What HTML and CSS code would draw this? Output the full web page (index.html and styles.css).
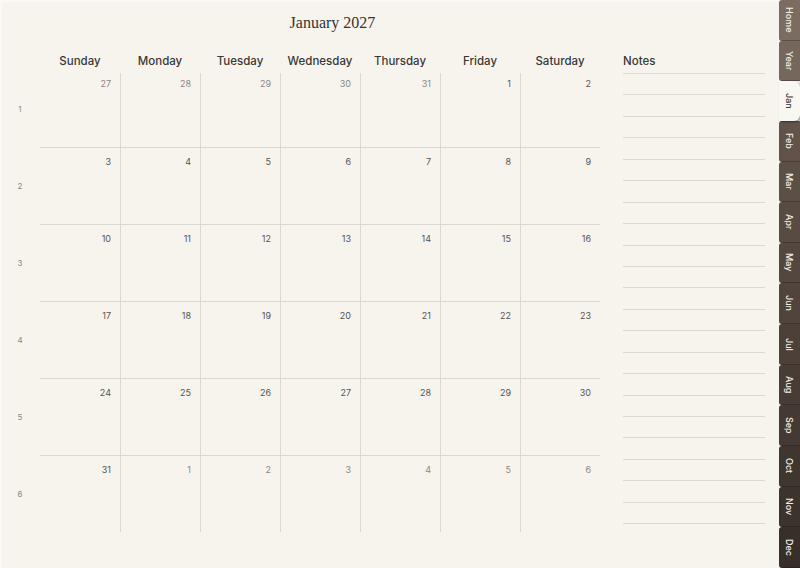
FILE: index.html
```html
<!DOCTYPE html>
<html>
<head>
<meta charset="utf-8">
<link rel="stylesheet" href="styles.css">
</head>
<body>
<div class="page">
  <div class="main">
    <div class="title">January 2027</div>
    <div class="content">
      <div class="cal">
        <div class="head">
          <div class="dn">Sunday</div><div class="dn">Monday</div><div class="dn">Tuesday</div><div class="dn">Wednesday</div><div class="dn">Thursday</div><div class="dn">Friday</div><div class="dn">Saturday</div>
        </div>
        <div class="week first">
          <div class="wk">1</div>
          <div class="cells">
            <div class="cell out">27</div><div class="cell out">28</div><div class="cell out">29</div><div class="cell out">30</div><div class="cell out">31</div><div class="cell">1</div><div class="cell">2</div>
          </div>
        </div>
        <div class="week">
          <div class="wk">2</div>
          <div class="cells">
            <div class="cell">3</div><div class="cell">4</div><div class="cell">5</div><div class="cell">6</div><div class="cell">7</div><div class="cell">8</div><div class="cell">9</div>
          </div>
        </div>
        <div class="week">
          <div class="wk">3</div>
          <div class="cells">
            <div class="cell">10</div><div class="cell">11</div><div class="cell">12</div><div class="cell">13</div><div class="cell">14</div><div class="cell">15</div><div class="cell">16</div>
          </div>
        </div>
        <div class="week">
          <div class="wk">4</div>
          <div class="cells">
            <div class="cell">17</div><div class="cell">18</div><div class="cell">19</div><div class="cell">20</div><div class="cell">21</div><div class="cell">22</div><div class="cell">23</div>
          </div>
        </div>
        <div class="week">
          <div class="wk">5</div>
          <div class="cells">
            <div class="cell">24</div><div class="cell">25</div><div class="cell">26</div><div class="cell">27</div><div class="cell">28</div><div class="cell">29</div><div class="cell">30</div>
          </div>
        </div>
        <div class="week">
          <div class="wk">6</div>
          <div class="cells">
            <div class="cell">31</div><div class="cell out">1</div><div class="cell out">2</div><div class="cell out">3</div><div class="cell out">4</div><div class="cell out">5</div><div class="cell out">6</div>
          </div>
        </div>
      </div>
      <div class="notes">
        <div class="nh">Notes</div>
        <div class="lines">
          <div class="ln"></div><div class="ln"></div><div class="ln"></div><div class="ln"></div><div class="ln"></div><div class="ln"></div><div class="ln"></div><div class="ln"></div><div class="ln"></div><div class="ln"></div><div class="ln"></div><div class="ln"></div><div class="ln"></div><div class="ln"></div><div class="ln"></div><div class="ln"></div><div class="ln"></div><div class="ln"></div><div class="ln"></div><div class="ln"></div><div class="ln"></div><div class="ln"></div>
        </div>
      </div>
    </div>
  </div>
  <div class="tabs">
    <div class="tab t1">Home</div>
    <div class="tab t2">Year</div>
    <div class="tab active">Jan</div>
    <div class="tab t4">Feb</div>
    <div class="tab t5">Mar</div>
    <div class="tab t6">Apr</div>
    <div class="tab t7">May</div>
    <div class="tab t8">Jun</div>
    <div class="tab t9">Jul</div>
    <div class="tab t10">Aug</div>
    <div class="tab t11">Sep</div>
    <div class="tab t12">Oct</div>
    <div class="tab t13">Nov</div>
    <div class="tab t14">Dec</div>
  </div>
</div>
</body>
</html>
```
FILE: styles.css
```css
* { box-sizing: border-box; }
html, body { margin: 0; padding: 0; }
body {
  background: #f7f4ee;
  font-family: Inter, "Noto Sans", sans-serif;
  width: 800px;
  height: 568px;
  overflow: hidden;
}
.page {
  display: flex;
  width: 800px;
  height: 568px;
}
.main {
  width: 779px;
  height: 568px;
  background: #f7f4ee;
  box-shadow: inset 2px 2px 0 #fbf9f5;
}
.title {
  width: 665px;
  text-align: center;
  font-family: "Liberation Serif", "DejaVu Serif", serif;
  font-size: 16px;
  line-height: 20px;
  color: #333;
  padding-top: 13px;
  height: 50px;
}
.content {
  display: flex;
}
.cal {
  width: 600px;
}
.head {
  display: flex;
  padding-left: 40px;
  padding-top: 1px;
  height: 23px;
}
.dn {
  width: 80px;
  text-align: center;
  font-size: 11.5px;
  font-weight: 500;
  line-height: 20px;
  color: #3a3835;
}
.week {
  display: flex;
  height: 77px;
}
.week.first { height: 74px; }
.wk {
  width: 40px;
  display: flex;
  align-items: center;
  justify-content: center;
  font-size: 8px;
  color: #8a8783;
}
.week.first .wk { margin-top: -3px; }
.cells {
  display: flex;
  flex: 1;
  border-top: 1px solid #dcd8d1;
}
.week.first .cells { border-top: none; }
.cell {
  width: 80px;
  padding: 8px 9px 0 0;
  text-align: right;
  font-size: 9px;
  line-height: 12px;
  color: #56534f;
  border-left: 1px solid #dcd8d1;
}
.week.first .cell { padding-top: 5px; }
.cell:first-child { border-left: none; }
.cell.out { color: #8a8782; }
.notes {
  margin-left: 23px;
  width: 142px;
}
.nh {
  height: 23px;
  padding-top: 1px;
  font-size: 11.5px;
  font-weight: 500;
  line-height: 20px;
  color: #3a3835;
}
.lines {
  display: flex;
  flex-direction: column;
  gap: 20.45px;
}
.ln {
  height: 1px;
  background: #dcd8d1;
}
.tabs {
  width: 21px;
  display: flex;
  flex-direction: column;
}
.tab {
  flex: 1;
  display: flex;
  align-items: center;
  justify-content: center;
  writing-mode: vertical-rl;
  font-size: 9px;
  font-weight: 500;
  color: #f3eee8;
  border-radius: 3px 0 0 3px;
  border-bottom: 1px solid rgba(0,0,0,0.25);
}
.t1 { background: #7b6c61; }
.t2 { background: #76675c; }
.active {
  background: #f9f7f2;
  color: #3a3835;
  border-radius: 0 6px 6px 0;
  box-shadow: 1px 1px 2px rgba(0,0,0,0.45);
  border-bottom: none;
  position: relative;
  z-index: 1;
}
.t4 { background: #61534a; }
.t5 { background: #5c4f46; }
.t6 { background: #584b42; }
.t7 { background: #54473f; }
.t8 { background: #50443c; }
.t9 { background: #4c4039; }
.t10 { background: #483d36; }
.t11 { background: #443a33; }
.t12 { background: #403630; }
.t13 { background: #3c332d; }
.t14 { background: #382f2a; }
```
